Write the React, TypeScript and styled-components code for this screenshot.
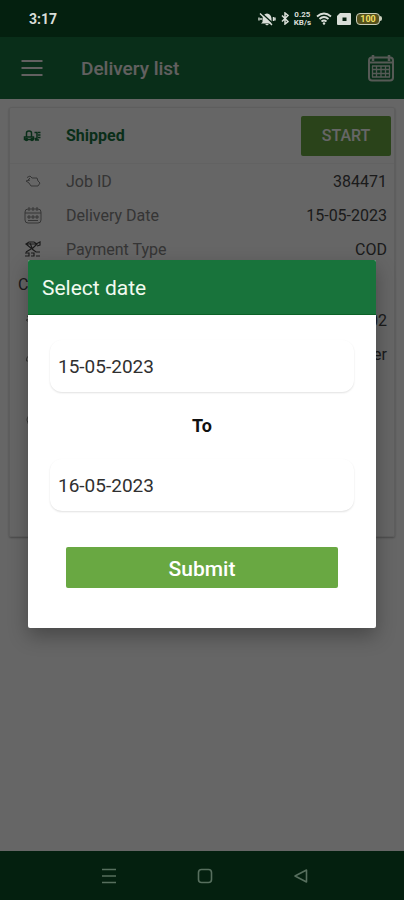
import React, { useState } from "react";
import styled, { createGlobalStyle } from "styled-components";

const GlobalStyle = createGlobalStyle`
  * { box-sizing: border-box; }
  body { margin: 0; background: #ffffff; font-family: Roboto, "Liberation Sans", sans-serif; }
  button, input { font-family: inherit; }
`;

const Screen = styled.div`
  display: flex;
  flex-direction: column;
  min-height: 100vh;
`;

const StatusBar = styled.header`
  display: flex;
  align-items: center;
  justify-content: space-between;
  height: 37px;
  padding: 0 22px 0 29px;
  background: #04200f;
  color: #d9ded8;
`;

const Clock = styled.span`
  font-size: 14px;
  font-weight: 700;
`;

const StatusIcons = styled.div`
  display: flex;
  align-items: center;
  gap: 5px;
`;

const Speed = styled.span`
  display: flex;
  flex-direction: column;
  align-items: center;
  font-size: 8px;
  line-height: 8px;
  font-weight: 700;
`;

const Battery = styled.span`
  display: flex;
  align-items: center;
  width: 26px;
  height: 12px;
  color: #f0df62;
`;

const BatteryLevel = styled.span`
  flex: 1;
  border: 1px solid #c9cdbb;
  border-radius: 4px;
  background: #55511c;
  font-size: 9px;
  line-height: 10px;
  font-weight: 700;
  text-align: center;
`;

const BatteryTip = styled.span`
  width: 2px;
  height: 5px;
  border-radius: 0 2px 2px 0;
  background: #c9cdbb;
`;

const Stage = styled.div`
  position: relative;
  display: flex;
  flex: 1;
  flex-direction: column;
`;

const AppBar = styled.div`
  display: flex;
  align-items: center;
  height: 62px;
  padding: 0 9px 0 20px;
  background: #18743f;
  color: #f4f0f0;
`;

const IconButton = styled.button`
  display: flex;
  padding: 0;
  border: 0;
  background: none;
  color: inherit;
`;

const PageTitle = styled.h1`
  flex: 1;
  margin: 0 0 0 37px;
  font-size: 19px;
  font-weight: 500;
`;

const List = styled.main`
  flex: 1;
  padding: 8px 9px 24px;
`;

const Card = styled.article`
  border: 1px solid #ececec;
  border-radius: 2px;
  box-shadow: 0 1px 2px rgba(0, 0, 0, 0.3);
  padding-bottom: 97px;
`;

const CardHeader = styled.div`
  display: flex;
  align-items: center;
  height: 56px;
  padding: 0 3px 0 12px;
  border-bottom: 1px solid #f6f6f6;
  color: #18743f;
`;

const Status = styled.strong`
  flex: 1;
  margin-left: 22px;
  font-size: 16px;
  font-weight: 700;
`;

const StartButton = styled.button`
  width: 90px;
  height: 40px;
  border: 0;
  border-radius: 2px;
  background: #6aa842;
  color: #ffffff;
  font-size: 16px;
  font-weight: 500;
`;

const Row = styled.div`
  display: flex;
  align-items: center;
  height: 34px;
  padding: 0 7px 0 12px;
  color: #858585;
  font-size: 16px;
`;

const RowLabel = styled.span`
  flex: 1;
  margin-left: 22px;
`;

const RowValue = styled.span`
  color: #454545;
`;

const SectionTitle = styled.h2`
  margin: 0;
  padding: 0 8px;
  color: #454545;
  font-size: 16px;
  font-weight: 400;
  line-height: 37px;
`;

const Scrim = styled.div`
  position: absolute;
  inset: 0;
  display: flex;
  align-items: center;
  justify-content: center;
  padding: 0 28px;
  background: rgba(0, 0, 0, 0.6);
`;

const Dialog = styled.form`
  width: 100%;
  max-width: 480px;
  overflow: hidden;
  border-radius: 2px;
  background: #ffffff;
  box-shadow: 0 8px 20px rgba(0, 0, 0, 0.3);
`;

const DialogTitle = styled.h2`
  margin: 0;
  padding: 2px 14px 0;
  border-bottom: 1px solid #0c6128;
  background: #18733b;
  color: #f1faef;
  font-size: 21px;
  font-weight: 400;
  line-height: 52px;
`;

const DialogBody = styled.div`
  display: flex;
  flex-direction: column;
  padding: 25px 22px 40px;
`;

const DateInput = styled.input`
  width: 100%;
  height: 52px;
  padding: 0 8px;
  border: 0;
  border-radius: 12px;
  outline: 0;
  background: #ffffff;
  box-shadow: 0 1px 2px rgba(0, 0, 0, 0.12);
  color: #303030;
  font-size: 19px;
`;

const To = styled.p`
  margin: 0;
  color: #111111;
  font-size: 18px;
  font-weight: 700;
  line-height: 67px;
  text-align: center;
`;

const SubmitButton = styled.button`
  height: 41px;
  margin: 36px 16px 0;
  padding: 2px 0 0;
  border: 0;
  border-radius: 2px;
  background: #69a842;
  color: #ffffff;
  font-size: 21px;
  font-weight: 500;
`;

const NavBar = styled.nav`
  display: flex;
  align-items: center;
  justify-content: center;
  gap: 80px;
  height: 49px;
  padding-left: 6px;
  background: #04200f;
  color: #576f5e;
`;

const MutedBell = () => (
  <svg width="18" height="14" viewBox="0 0 18 14" fill="currentColor" aria-hidden="true">
    <path d="M4.500 10V6.500Q5 2 9 1.500Q13 2 13.500 6.500V10L15 11.500H3ZM7 12h4L9 13.500Z" />
    <path d="M3 .5 15.500 12" stroke="#04200f" strokeWidth="1.400" />
    <path d="M2 1.500 14 13M1 5.500v3M17 5.500v3M3 6v2M15.500 5v4" stroke="currentColor" strokeWidth="1.400" />
  </svg>
);

const Bluetooth = () => (
  <svg width="8" height="13" viewBox="0 0 8 13" fill="none" stroke="currentColor" strokeWidth="1.500" aria-hidden="true">
    <path d="m1 3.500 6 6L4 12V1l3 2.500-6 6" />
  </svg>
);

const Wifi = () => (
  <svg width="16" height="13" viewBox="0 0 16 13" fill="none" stroke="currentColor" strokeWidth="1.800" aria-hidden="true">
    <path d="M1 4.500Q8-1.500 15 4.500M3.500 7Q8 3 12.500 7M5.500 9.500Q8 7.500 10.500 9.500" />
    <circle cx="8" cy="11.500" r="1.200" fill="currentColor" stroke="none" />
  </svg>
);

const SimCard = () => (
  <svg width="14" height="12" viewBox="0 0 14 12" aria-hidden="true">
    <path d="M3 0h10a1 1 0 0 1 1 1v10a1 1 0 0 1-1 1H1a1 1 0 0 1-1-1V3Z" fill="currentColor" />
    <path d="M5.500 4.500h4v3.500h-4z" fill="#04200f" />
  </svg>
);

const MenuIcon = () => (
  <svg width="24" height="20" viewBox="0 0 24 20" stroke="currentColor" strokeWidth="2" aria-hidden="true">
    <path d="M1.500 3h21M1.500 10h21M1.500 17h21" />
  </svg>
);

const CalendarIcon = () => (
  <svg width="28" height="28" viewBox="0 0 28 28" fill="none" stroke="#d8e0d8" aria-hidden="true">
    <rect x="2" y="3.500" width="24" height="23" rx="3" strokeWidth="2" />
    <path d="M2 8.500h24" strokeWidth="2" />
    <path d="M6 1v6M22 1v6" strokeWidth="2.500" />
    <path d="M5 12h18M5 15.500h18M5 19.500h18M5 23h18M5.500 12v11M9.500 12v11M14 12v11M18.500 12v11M22.500 12v11" strokeWidth="1.300" />
  </svg>
);

const TruckIcon = () => (
  <svg width="22" height="18" viewBox="0 0 22 18" fill="none" stroke="currentColor" strokeWidth="1.500" aria-hidden="true">
    <path d="M4.500 9.500V6q0-2 2.500-2t2.500 2v3.500M2.500 12.500V10h9v2.500Z" />
    <circle cx="4.500" cy="12.500" r="1" />
    <circle cx="10" cy="12.500" r="1" />
    <path d="M12.500 5.500h2.500v6h-2.500M16 5.500h2.500M16 8h2.500M16 10.500h2.500M13 13h4" />
  </svg>
);

const TagIcon = () => (
  <svg width="22" height="18" viewBox="0 0 22 18" fill="none" stroke="currentColor" aria-hidden="true">
    <path d="M5 5.500 8 4l2 2h5l1 3 2 2-2 3H9l-2-3-3-2 4-1M8 6l-2 2" />
  </svg>
);

const SmallCalendar = () => (
  <svg width="22" height="18" viewBox="0 0 22 18" fill="none" stroke="currentColor" aria-hidden="true">
    <rect x="3" y="3" width="16" height="14" rx="3" />
    <path d="M3 7h16M7 1v4M11 1v4M15 1v4M6 10h2v2H6zM10 10h2v2h-2zM14 10h2v2h-2zM6 14.500h10" />
  </svg>
);

const PaymentIcon = () => (
  <svg width="22" height="18" viewBox="0 0 22 18" fill="none" stroke="#444444" strokeWidth="1.200" aria-hidden="true">
    <path d="m4 4 3-2h5l3 2-5 5ZM5 4h9M8 3l2 5M14 4l4-2v3l-3 1M10 9l4 3h4M9 9l-5 3M3 13h4v3H3M9 13h3v3H9M14 16h4" />
  </svg>
);

const PersonIcon = () => (
  <svg width="22" height="18" viewBox="0 0 22 18" fill="none" stroke="currentColor" aria-hidden="true">
    <circle cx="11" cy="5" r="3.500" />
    <path d="M4.500 16v-2q0-3 4-3h5q4 0 4 3v2Z" />
  </svg>
);

const PinIcon = () => (
  <svg width="22" height="18" viewBox="0 0 22 18" fill="none" stroke="currentColor" aria-hidden="true">
    <path d="M11 17Q5 11 5 7a6 6 0 0 1 12 0q0 4-6 10Z" />
    <circle cx="11" cy="7" r="2" />
  </svg>
);

const RecentsIcon = () => (
  <svg width="16" height="16" viewBox="0 0 16 16" stroke="currentColor" strokeWidth="1.600" aria-hidden="true">
    <path d="M1 1.500h14M1 8h14M1 14.500h14" />
  </svg>
);

const HomeIcon = () => (
  <svg width="16" height="16" viewBox="0 0 16 16" fill="none" stroke="currentColor" strokeWidth="1.600" aria-hidden="true">
    <rect x="1.500" y="1.500" width="13" height="13" rx="3" />
  </svg>
);

const BackIcon = () => (
  <svg width="16" height="16" viewBox="0 0 16 16" fill="none" stroke="currentColor" strokeWidth="1.600" strokeLinejoin="round" aria-hidden="true">
    <path d="M13.500 2v12L2 8Z" />
  </svg>
);

const jobRows = [
  { icon: <TagIcon />, label: "Job ID", value: "384471" },
  { icon: <SmallCalendar />, label: "Delivery Date", value: "15-05-2023" },
  { icon: <PaymentIcon />, label: "Payment Type", value: "COD" },
];

const customerRows = [
  { icon: <TagIcon />, value: "02" },
  { icon: <PersonIcon />, value: "er" },
];

export default function App() {
  const [from, setFrom] = useState("15-05-2023");
  const [to, setTo] = useState("16-05-2023");

  return (
    <Screen>
      <GlobalStyle />
      <StatusBar>
        <Clock>3:17</Clock>
        <StatusIcons>
          <MutedBell />
          <Bluetooth />
          <Speed>
            <span>0.25</span>
            <span>KB/s</span>
          </Speed>
          <Wifi />
          <SimCard />
          <Battery>
            <BatteryLevel>100</BatteryLevel>
            <BatteryTip />
          </Battery>
        </StatusIcons>
      </StatusBar>
      <Stage>
        <AppBar>
          <IconButton type="button" aria-label="Menu"><MenuIcon /></IconButton>
          <PageTitle>Delivery list</PageTitle>
          <IconButton type="button" aria-label="Filter by date"><CalendarIcon /></IconButton>
        </AppBar>
        <List>
          <Card>
            <CardHeader>
              <TruckIcon />
              <Status>Shipped</Status>
              <StartButton type="button">START</StartButton>
            </CardHeader>
            {jobRows.map((row) => (
              <Row key={row.label}>
                {row.icon}
                <RowLabel>{row.label}</RowLabel>
                <RowValue>{row.value}</RowValue>
              </Row>
            ))}
            <SectionTitle>C</SectionTitle>
            {customerRows.map((row) => (
              <Row key={row.value}>
                {row.icon}
                <RowLabel />
                <RowValue>{row.value}</RowValue>
              </Row>
            ))}
            <Row />
            <Row><PinIcon /></Row>
          </Card>
        </List>
        <Scrim>
          <Dialog role="dialog" aria-labelledby="dialog-title" onSubmit={(e) => e.preventDefault()}>
            <DialogTitle id="dialog-title">Select date</DialogTitle>
            <DialogBody>
              <DateInput aria-label="From date" value={from} onChange={(e) => setFrom(e.target.value)} />
              <To>To</To>
              <DateInput aria-label="To date" value={to} onChange={(e) => setTo(e.target.value)} />
              <SubmitButton type="submit">Submit</SubmitButton>
            </DialogBody>
          </Dialog>
        </Scrim>
      </Stage>
      <NavBar>
        <IconButton type="button" aria-label="Recent apps"><RecentsIcon /></IconButton>
        <IconButton type="button" aria-label="Home"><HomeIcon /></IconButton>
        <IconButton type="button" aria-label="Back"><BackIcon /></IconButton>
      </NavBar>
    </Screen>
  );
}
